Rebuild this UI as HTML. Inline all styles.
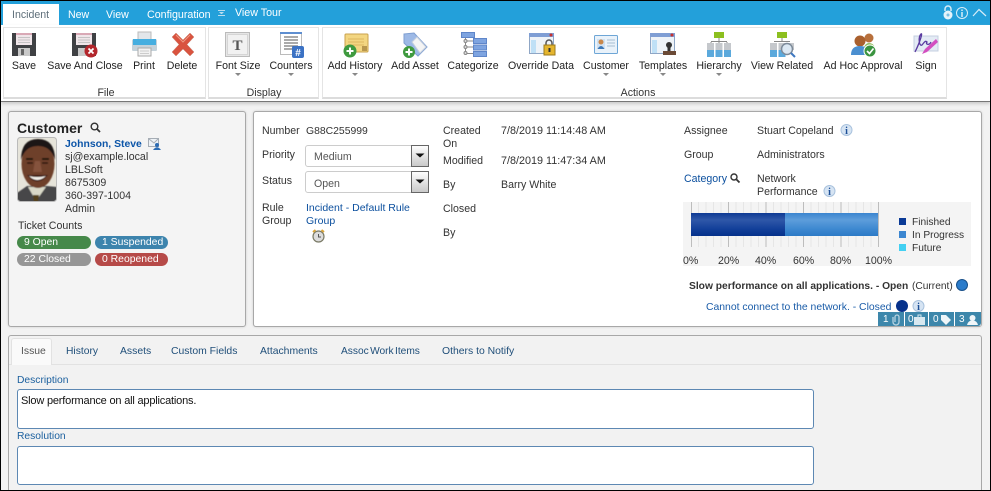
<!DOCTYPE html>
<html><head><meta charset="utf-8">
<style>
html,body{margin:0;padding:0;width:991px;height:491px;overflow:hidden;background:#f2f2f2}
body{position:relative;font-family:"Liberation Sans",sans-serif;font-size:10.6px;color:#333}
.a{position:absolute;white-space:nowrap;line-height:13px;margin-top:1px}
.b{position:absolute;box-sizing:border-box}
.t{color:#fff}
.r{color:#222;transform:translateX(-50%)}
.g{color:#333;transform:translateX(-50%)}
.l{color:#0b4f9e}
svg{position:absolute;overflow:visible}
.c{position:absolute;color:#fff;height:13px;line-height:14px;border-radius:7px;padding-left:7px;box-sizing:border-box;font-size:10.4px;white-space:nowrap}
.ar{position:absolute;width:0;height:0;border-left:3px solid transparent;border-right:3px solid transparent;border-top:3px solid #888;top:73px}
.tb{color:#1f4e79;font-size:10.4px}
</style></head><body>
<div class="b" style="left:1px;top:1px;width:989px;height:24px;background:#23a0da"></div>
<div class="b" style="left:3px;top:4px;width:56px;height:21px;background:#fff"></div>
<div class="a" style="left:12px;top:8px;color:#5f6f7a">Incident</div>
<div class="a t" style="left:68px;top:8px">New</div>
<div class="a t" style="left:106px;top:8px">View</div>
<div class="a t" style="left:147px;top:8px;font-size:10.700px">Configuration</div>
<div class="a t" style="left:235px;top:6px;font-size:10.700px">View Tour</div>
<svg style="left:218px;top:10px" width="8" height="6"><path d="M0 0H7V1H0ZM1 2H6L4 4H3Z M0 5H7V6H0Z" fill="#b8dcef"/></svg>
<svg style="left:942px;top:5px" width="45" height="16">
<path d="M3 6V4A3 3 0 0 1 9 4V6" fill="none" stroke="#d7edf8" stroke-width="1.500"/><circle cx="6" cy="10" r="4.500" fill="#e4f3fa"/><circle cx="6" cy="10" r="1.500" fill="#7cbfe2"/>
<circle cx="20" cy="8" r="5.500" fill="none" stroke="#d7edf8"/><path d="M20 4.500V6M20 7V12" stroke="#d7edf8" stroke-width="1.500"/>
<path d="M31 11L37 4.500L44 11" fill="none" stroke="#d7edf8" stroke-width="1.200"/></svg>

<div class="b" style="left:1px;top:25px;width:989px;height:77px;background:#fff;border-bottom:1px solid #777;box-shadow:0 2px 3px #ccc"></div>
<div class="b" style="left:3px;top:27px;width:203px;height:72px;border:1px solid #e4e4e4;border-bottom:2px solid #dcdcdc"></div>
<div class="b" style="left:208px;top:27px;width:111px;height:72px;border:1px solid #e4e4e4;border-bottom:2px solid #dcdcdc"></div>
<div class="b" style="left:322px;top:27px;width:625px;height:72px;border:1px solid #e4e4e4;border-bottom:2px solid #dcdcdc"></div>

<!-- ribbon icons -->
<svg style="left:12px;top:32px" width="24" height="25"><path d="M0 1H24V24H0Z" fill="#3f4144"/><rect x="4" y="1" width="16" height="12" fill="#f0e6ea"/><rect x="4" y="1" width="16" height="2" fill="#d9a9b6"/><path d="M6 5.500H18M6 8H18M6 10.500H18" stroke="#c4c4c4"/><rect x="6" y="16" width="12" height="8" fill="#c9c9c9"/><rect x="9" y="17" width="3" height="6" fill="#666"/></svg>
<svg style="left:72px;top:32px" width="26" height="26"><path d="M0 1H24V24H0Z" fill="#3f4144"/><rect x="4" y="1" width="16" height="12" fill="#f0e6ea"/><rect x="4" y="1" width="16" height="2" fill="#d9a9b6"/><path d="M6 5.500H18M6 8H18M6 10.500H18" stroke="#c4c4c4"/><rect x="6" y="16" width="12" height="8" fill="#c9c9c9"/><circle cx="19" cy="19" r="6.500" fill="#b3262c"/><path d="M16.500 16.500L21.500 21.500M21.500 16.500L16.500 21.500" stroke="#fff" stroke-width="1.800"/></svg>
<svg style="left:132px;top:32px" width="25" height="25"><rect x="6" y="0" width="13" height="8" fill="#e2e6ea" stroke="#bbb"/><path d="M2 7H23Q25 7 25 9V18Q25 19 23 19H2Q0 19 0 18V9Q0 7 2 7Z" fill="#c5d2da"/><rect x="1" y="7" width="23" height="6" fill="#45aee0"/><rect x="6" y="16" width="13" height="8" fill="#f2f2f2" stroke="#aaa"/><path d="M8 19H17M8 21.500H17" stroke="#ccc"/></svg>
<svg style="left:172px;top:33px" width="22" height="23"><path d="M4 0L11 7L18 0L22 4L15 11.500L22 19L18 23L11 16L4 23L0 19L7 11.500L0 4Z" fill="#d9533f" stroke="#c98a7a" stroke-width=".5"/><path d="M4 2L11 9L18 2" fill="none" stroke="#ee9a85"/></svg>
<svg style="left:225px;top:32px" width="25" height="25"><rect x=".5" y=".5" width="24" height="24" fill="#e6e6e6" stroke="#bbb"/><rect x="2.500" y="2.500" width="20" height="20" fill="#f1f1f1" stroke="#d5d5d5"/><text x="12.500" y="18" text-anchor="middle" font-family="Liberation Serif" font-weight="bold" font-size="15" fill="#555">T</text></svg>
<svg style="left:280px;top:32px" width="25" height="26"><rect x=".5" y=".5" width="21" height="22" fill="#fff" stroke="#bbb"/><rect x="0" y="0" width="22" height="2" fill="#5e8ed0"/><path d="M4 5H18M4 8H18M4 11H18M4 14H18M4 17H15" stroke="#555"/><rect x="12" y="14" width="12" height="12" rx="2" fill="#3b72c4"/><text x="18" y="24" text-anchor="middle" font-weight="bold" font-size="10" fill="#fff">#</text></svg>
<svg style="left:343px;top:33px" width="26" height="24"><rect x="2" y="1" width="23" height="18" rx="1" fill="#f3d681" stroke="#c9a24e"/><path d="M5 6H21M5 9H21M5 12H21" stroke="#dcb75e"/><rect x="19" y="13" width="5" height="5" fill="#b8974e"/><circle cx="7" cy="18" r="6.500" fill="#3f9a3f"/><path d="M7 14.500V21.500M3.500 18H10.500" stroke="#fff" stroke-width="2"/></svg>
<svg style="left:403px;top:32px" width="26" height="26"><path d="M1 2L11 1L24 15L15 24L1 11Z" fill="#9db9e6" stroke="#7f9fd2"/><path d="M9 10L14 5L23 15L17 21Z" fill="#f4f4f4" stroke="#c5cfdd"/><circle cx="6" cy="20" r="6" fill="#3f9a3f"/><path d="M6 16.500V23.500M2.500 20H9.500" stroke="#fff" stroke-width="2"/></svg>
<svg style="left:461px;top:32px" width="26" height="26"><rect x=".5" y=".5" width="13" height="5" fill="#7ea4e0" stroke="#5f86c9"/><path d="M4.500 6V21.500H12M4.500 9H12M4.500 15H12" fill="none" stroke="#888"/><circle cx="4.500" cy="9" r="1.500" fill="#ddd" stroke="#888"/><circle cx="4.500" cy="15" r="1.500" fill="#ddd" stroke="#888"/><circle cx="4.500" cy="21" r="1.500" fill="#ddd" stroke="#888"/><g fill="#7ea4e0" stroke="#5f86c9"><rect x="12.500" y="6.500" width="13" height="5"/><rect x="12.500" y="13" width="13" height="5"/><rect x="12.500" y="19.500" width="13" height="5"/></g></svg>
<svg style="left:529px;top:33px" width="27" height="25"><rect x=".5" y=".5" width="24" height="20" fill="#eef3f8" stroke="#8fa6c5"/><rect x="0" y="0" width="25" height="4" fill="#7f9ed4"/><circle cx="22" cy="2" r="1.500" fill="#c8322f"/><rect x="2" y="7" width="5" height="13" fill="#bfe0f6"/><path d="M17 12V10A3 3 0 0 1 23 10V12" fill="none" stroke="#555" stroke-width="1.500"/><rect x="15" y="12" width="11" height="10" fill="#e5b52e" stroke="#9c7a1c"/><rect x="19.500" y="15" width="2" height="4" fill="#333"/></svg>
<svg style="left:594px;top:35px" width="24" height="20"><rect x=".5" y=".5" width="23" height="18" rx="1" fill="#e9f2fa" stroke="#6ea6d6"/><rect x="3" y="4" width="8" height="10" fill="#cfe1f2"/><circle cx="7" cy="7" r="2.500" fill="#c9884a"/><path d="M3.500 14Q7 8 10.500 14Z" fill="#3b78b8"/><path d="M13 5H21M13 8H21M13 11H21" stroke="#a8bdd2"/></svg>
<svg style="left:650px;top:33px" width="27" height="25"><rect x=".5" y=".5" width="24" height="20" fill="#eef3f8" stroke="#8fa6c5"/><rect x="0" y="0" width="25" height="4" fill="#7f9ed4"/><circle cx="22" cy="2" r="1.500" fill="#c8322f"/><rect x="2" y="7" width="5" height="13" fill="#bfe0f6"/><circle cx="19" cy="12" r="3" fill="#333"/><rect x="17.500" y="13" width="3" height="6" fill="#333"/><rect x="13" y="18" width="13" height="4" fill="#6b4a36"/></svg>
<svg style="left:707px;top:32px" width="24" height="26"><rect x="7" y="0" width="10" height="6" fill="#8cbf1f"/><path d="M12 6V9M4 10V13M12 10V13M20 10V13M4 9.500H20" stroke="#888"/><g fill="#c5c8cc"><rect x="0" y="11" width="7" height="7"/><rect x="8.500" y="11" width="7" height="7"/><rect x="17" y="11" width="7" height="7"/></g><g fill="#5ba9dc"><rect x="0" y="18" width="7" height="7"/><rect x="8.500" y="18" width="7" height="7"/><rect x="17" y="18" width="7" height="7"/></g></svg>
<svg style="left:770px;top:32px" width="26" height="26"><rect x="7" y="0" width="10" height="6" fill="#8cbf1f"/><path d="M12 6V9M4 9.500H20" stroke="#888"/><g fill="#c5c8cc"><rect x="0" y="11" width="7" height="7"/><rect x="8.500" y="11" width="7" height="7"/><rect x="17" y="11" width="7" height="7"/></g><g fill="#5ba9dc"><rect x="0" y="18" width="7" height="7"/><rect x="8.500" y="18" width="7" height="7"/></g><circle cx="17" cy="17" r="5.500" fill="#dce8f3" stroke="#7d8a99" stroke-width="1.500"/><path d="M21 21L25 25" stroke="#3f78c0" stroke-width="2"/></svg>
<svg style="left:851px;top:32px" width="27" height="27"><circle cx="18" cy="6" r="4.500" fill="#b8703c"/><path d="M12 20Q13 11 18 11Q24 11 25 20Z" fill="#93bd64"/><circle cx="9" cy="9" r="5.500" fill="#a9602e"/><path d="M0 23Q0 14 9 14Q18 14 18 23Z" fill="#4b8fd0"/><circle cx="19" cy="19" r="6" fill="#3b9440" stroke="#fff"/><path d="M16 19L18.500 21.500L22.500 16.500" fill="none" stroke="#fff" stroke-width="1.700"/></svg>
<svg style="left:913px;top:32px" width="26" height="25"><rect x="1" y="4" width="24" height="15" fill="#e4ebf5" stroke="#c4cfe0"/><path d="M2 20C7 10 10 0 8 2C5 5 6 15 9 13C11 11 12 8 14 10C12 12 16 14 18 10" fill="none" stroke="#5a3aa0" stroke-width="1.300"/><path d="M9 22L12 17L23 7L25 10L14 20Z" fill="#d34fc0"/></svg>

<!-- ribbon labels -->
<div class="a r" style="left:24px;top:59px">Save</div>
<div class="a r" style="left:85px;top:59px">Save And Close</div>
<div class="a r" style="left:144px;top:59px">Print</div>
<div class="a r" style="left:182px;top:59px">Delete</div>
<div class="a r" style="left:238px;top:59px">Font Size</div>
<div class="a r" style="left:291px;top:59px">Counters</div>
<div class="a r" style="left:355px;top:59px">Add History</div>
<div class="a r" style="left:415px;top:59px">Add Asset</div>
<div class="a r" style="left:473px;top:59px">Categorize</div>
<div class="a r" style="left:541px;top:59px">Override Data</div>
<div class="a r" style="left:606px;top:59px">Customer</div>
<div class="a r" style="left:663px;top:59px">Templates</div>
<div class="a r" style="left:719px;top:59px">Hierarchy</div>
<div class="a r" style="left:782px;top:59px">View Related</div>
<div class="a r" style="left:863px;top:59px">Ad Hoc Approval</div>
<div class="a r" style="left:926px;top:59px">Sign</div>
<div class="ar" style="left:235px"></div><div class="ar" style="left:288px"></div><div class="ar" style="left:352px"></div><div class="ar" style="left:603px"></div><div class="ar" style="left:660px"></div><div class="ar" style="left:716px"></div>
<div class="a g" style="left:106px;top:86px">File</div>
<div class="a g" style="left:264px;top:86px">Display</div>
<div class="a g" style="left:638px;top:86px">Actions</div>

<!-- customer card -->
<div class="b" style="left:8px;top:111px;width:238px;height:216px;background:#f4f4f4;border:1px solid #a8a8a8;border-radius:3px;box-shadow:0 0 2px #ccc"></div>
<div class="a" style="left:17px;top:121px;margin-top:0;font-size:14px;line-height:15px;font-weight:bold;color:#222">Customer</div>
<svg style="left:90px;top:122px" width="11" height="11"><circle cx="4.500" cy="4.500" r="3.300" fill="none" stroke="#333" stroke-width="1.400"/><path d="M7 7L10 10" stroke="#333" stroke-width="1.800"/></svg>
<svg style="left:17px;top:137px" width="40" height="65"><defs><filter id="f" x="-10%" y="-10%" width="120%" height="120%"><feGaussianBlur stdDeviation=".6"/></filter><clipPath id="p"><rect x="0" y="0" width="40" height="64" rx="3"/></clipPath></defs><g clip-path="url(#p)"><rect width="40" height="64" fill="#e6e4da"/><g filter="url(#f)"><path d="M0 56L10 49H30L40 50V66H0Z" fill="#46464a"/><path d="M11 50L19 64L29 50Z" fill="#d9d9c8"/><path d="M16 58H22L21 66H17Z" fill="#54431f"/><ellipse cx="21" cy="27" rx="16.500" ry="24" fill="#6e3f2c"/><path d="M4 23Q4 2 21 2Q38 2 38 23Q34 9 21 9Q8 9 4 23Z" fill="#1f1512"/><path d="M9 22H16M25 22H32" stroke="#24130d" stroke-width="2"/><path d="M10 26H16M25 26H31" stroke="#2d1810" stroke-width="1.500"/><path d="M18 24L16 35H25L23 24Z" fill="#85523c"/><path d="M10 38Q20 51 31 38" fill="#3d1c12"/><path d="M12 39Q20 47 29 39Q20 41 12 39Z" fill="#f2efe9"/></g></g><rect x=".5" y=".5" width="39" height="64" rx="3" fill="none" stroke="#bbb"/></svg>
<div class="a l" style="left:65px;top:137px;font-weight:bold;color:#0c55a8;font-size:10.400px">Johnson, Steve</div>
<svg style="left:148px;top:137px" width="13" height="13"><rect x=".5" y="1.500" width="10" height="8" fill="#eef2f6" stroke="#a6adb5"/><path d="M1 2L6 6L10 2" fill="none" stroke="#a6adb5"/><circle cx="9" cy="8" r="2" fill="#2d6cb3"/><path d="M5 13Q9 7.500 13 13Z" fill="#2d6cb3"/></svg>
<div class="a" style="left:65px;top:150px">sj@example.local</div>
<div class="a" style="left:65px;top:163px">LBLSoft</div>
<div class="a" style="left:65px;top:176px">8675309</div>
<div class="a" style="left:65px;top:189px">360-397-1004</div>
<div class="a" style="left:65px;top:202px">Admin</div>
<div class="a" style="left:18px;top:219px">Ticket Counts</div>
<div class="c" style="left:17px;top:236px;width:74px;background:#46894a">9 Open</div>
<div class="c" style="left:95px;top:236px;width:73px;background:#3d84ad">1 Suspended</div>
<div class="c" style="left:17px;top:253px;width:74px;background:#969696">22 Closed</div>
<div class="c" style="left:95px;top:253px;width:73px;background:#b64a48">0 Reopened</div>

<!-- detail card -->
<div class="b" style="left:253px;top:111px;width:729px;height:216px;background:#fff;border:1px solid #a8a8a8;border-radius:3px;box-shadow:0 0 2px #ccc"></div>
<div class="a" style="left:262px;top:124px">Number</div>
<div class="a" style="left:306px;top:124px;font-size:10.400px">G88C255999</div>
<div class="a" style="left:262px;top:148px">Priority</div>
<div class="b" style="left:305px;top:145px;width:124px;height:22px;background:#fff;border:1px solid #ccc;border-radius:3px"></div>
<div class="a" style="left:314px;top:150px;color:#555">Medium</div>
<svg style="left:411px;top:145px" width="18" height="22"><defs><linearGradient id="s" x1="0" y1="0" x2="0" y2="1"><stop offset="0" stop-color="#fff"/><stop offset="1" stop-color="#c8c8c8"/></linearGradient></defs><rect x=".5" y=".5" width="17" height="21" fill="url(#s)" stroke="#666"/><path d="M4.500 8.500H13.500L9 12.500Z" fill="#111"/></svg>
<div class="a" style="left:262px;top:174px">Status</div>
<div class="b" style="left:305px;top:171px;width:124px;height:22px;background:#fff;border:1px solid #ccc;border-radius:3px"></div>
<div class="a" style="left:314px;top:177px;color:#555">Open</div>
<svg style="left:411px;top:171px" width="18" height="22"><rect x=".5" y=".5" width="17" height="21" fill="url(#s)" stroke="#666"/><path d="M4.500 8.500H13.500L9 12.500Z" fill="#111"/></svg>
<div class="a" style="left:262px;top:201px">Rule</div>
<div class="a" style="left:262px;top:214px">Group</div>
<div class="a l" style="left:306px;top:201px;font-size:10.500px">Incident - Default Rule</div>
<div class="a l" style="left:306px;top:214px;font-size:10.500px">Group</div>
<svg style="left:312px;top:229px" width="13" height="14"><circle cx="6.500" cy="7.500" r="5.500" fill="#dcdcdc" stroke="#7a7a66" stroke-width="1.200"/><path d="M1 3L3.500 1M12 3L9.500 1" stroke="#d9a53a" stroke-width="2"/><path d="M6.500 5V8H9" fill="none" stroke="#555"/></svg>
<div class="a" style="left:443px;top:124px">Created</div>
<div class="a" style="left:443px;top:137px">On</div>
<div class="a" style="left:443px;top:154px">Modified</div>
<div class="a" style="left:443px;top:178px">By</div>
<div class="a" style="left:443px;top:202px">Closed</div>
<div class="a" style="left:443px;top:226px">By</div>
<div class="a" style="left:501px;top:124px;font-size:10.800px">7/8/2019 11:14:48 AM</div>
<div class="a" style="left:501px;top:154px;font-size:10.800px">7/8/2019 11:47:34 AM</div>
<div class="a" style="left:501px;top:178px">Barry White</div>

<div class="a" style="left:684px;top:124px">Assignee</div>
<div class="a" style="left:757px;top:124px">Stuart Copeland</div>
<svg style="left:840px;top:124px" width="13" height="13"><circle cx="6.500" cy="6" r="5.500" fill="#d6e4f3" stroke="#a9c2dd"/><text x="6.500" y="10" text-anchor="middle" font-family="Liberation Serif" font-weight="bold" font-size="10" fill="#1d4f96">i</text></svg>
<div class="a" style="left:684px;top:148px">Group</div>
<div class="a" style="left:757px;top:148px">Administrators</div>
<div class="a l" style="left:684px;top:172px">Category</div>
<svg style="left:730px;top:173px" width="10" height="10"><circle cx="4" cy="4" r="3" fill="none" stroke="#333" stroke-width="1.400"/><path d="M6.500 6.500L9.500 9.500" stroke="#333" stroke-width="1.800"/></svg>
<div class="a" style="left:757px;top:172px">Network</div>
<div class="a" style="left:757px;top:185px">Performance</div>
<svg style="left:823px;top:185px" width="13" height="13"><circle cx="6.500" cy="6" r="5.500" fill="#d6e4f3" stroke="#a9c2dd"/><text x="6.500" y="10" text-anchor="middle" font-family="Liberation Serif" font-weight="bold" font-size="10" fill="#1d4f96">i</text></svg>

<!-- chart -->
<div class="b" style="left:683px;top:202px;width:288px;height:64px;background:#f4f4f4"></div>
<svg style="left:690px;top:202px" width="190" height="45"><g stroke="#e6e6e6"><path d="M8.500 0V45M16 0V45M23.500 0V45M31 0V45M46 0V45M53.500 0V45M61 0V45M68.500 0V45M83.500 0V45M91 0V45M98.500 0V45M106 0V45M121 0V45M128.500 0V45M136 0V45M143.500 0V45M158.500 0V45M166 0V45M173.500 0V45M181 0V45"/></g><g stroke="#bdbdbd"><path d="M1.500 0V45M38.500 0V45M76 0V45M113.500 0V45M151 0V45M188.500 0V45"/></g></svg>
<div class="b" style="left:691px;top:213px;width:94px;height:23px;background:linear-gradient(#0e3a94,#2f57a8 30%,#123f99 70%,#06318b)"></div>
<div class="b" style="left:785px;top:213px;width:93px;height:23px;background:linear-gradient(#3a85cf,#5d9ddb 30%,#3d88d0 70%,#2c7ac6)"></div>
<div class="a" style="left:683px;top:254px">0%</div>
<div class="a" style="left:718px;top:254px">20%</div>
<div class="a" style="left:755px;top:254px">40%</div>
<div class="a" style="left:793px;top:254px">60%</div>
<div class="a" style="left:830px;top:254px">80%</div>
<div class="a" style="left:865px;top:254px">100%</div>
<div class="b" style="left:899px;top:218px;width:7px;height:7px;background:#0a3a96"></div>
<div class="b" style="left:899px;top:231px;width:7px;height:7px;background:#3b86d0"></div>
<div class="b" style="left:899px;top:244px;width:7px;height:7px;background:#43d0f2"></div>
<div class="a" style="left:912px;top:215px;font-size:10.200px">Finished</div>
<div class="a" style="left:912px;top:228px;font-size:10.200px">In Progress</div>
<div class="a" style="left:912px;top:241px;font-size:10.200px">Future</div>

<div class="a" style="left:689px;top:279px;font-size:10.250px;font-weight:bold;color:#333">Slow performance on all applications. - Open</div>
<div class="a" style="left:912px;top:279px;font-size:10.200px">(Current)</div>
<div class="b" style="left:956px;top:279px;width:12px;height:12px;border-radius:50%;background:#2b7ccb;border:1px solid #18508a"></div>
<div class="a l" style="left:706px;top:300px;font-size:10.400px;color:#1a5ca8">Cannot connect to the network. - Closed</div>
<div class="b" style="left:896px;top:300px;width:12px;height:12px;border-radius:50%;background:#06318b"></div>
<svg style="left:912px;top:300px" width="13" height="13"><circle cx="6.500" cy="6" r="5.500" fill="#d6e4f3" stroke="#a9c2dd"/><text x="6.500" y="10" text-anchor="middle" font-family="Liberation Serif" font-weight="bold" font-size="10" fill="#1d4f96">i</text></svg>

<div class="b" style="left:878px;top:312px;width:26px;height:14px;background:#3d87ab"></div>
<div class="b" style="left:905px;top:312px;width:23px;height:14px;background:#3d87ab"></div>
<div class="b" style="left:929px;top:312px;width:25px;height:14px;background:#3d87ab"></div>
<div class="b" style="left:955px;top:312px;width:26px;height:14px;background:#3d87ab;border-radius:0 0 3px 0"></div>
<div class="a t" style="left:883px;top:312px;font-size:10px">1</div>
<svg style="left:892px;top:314px" width="8" height="11"><path d="M1 3V8A3 3 0 0 0 7 8V3A2 2 0 0 0 3 3V8" fill="none" stroke="#b6d3e1" stroke-width="1.300"/></svg>
<div class="a t" style="left:908px;top:312px;font-size:10px">0</div>
<svg style="left:914px;top:315px" width="12" height="10"><rect x="0" y="2" width="11" height="8" fill="#d8e8f0"/><path d="M4 2V0H7V2" fill="none" stroke="#d8e8f0"/></svg>
<div class="a t" style="left:933px;top:312px;font-size:10px">0</div>
<svg style="left:941px;top:315px" width="10" height="10"><path d="M0 0H5L10 5L5 10L0 5Z" fill="#eef5f8"/></svg>
<div class="a t" style="left:959px;top:312px;font-size:10px">3</div>
<svg style="left:967px;top:315px" width="11" height="10"><circle cx="5.500" cy="3" r="3" fill="#f0f6f9"/><path d="M0 10Q1 5.500 5.500 5.500Q10 5.500 11 10Z" fill="#f0f6f9"/></svg>

<!-- bottom -->
<div class="b" style="left:8px;top:335px;width:974px;height:156px;background:#f2f2f2;border:1px solid #a8a8a8;border-bottom:none;border-radius:3px 3px 0 0"></div>
<div class="b" style="left:9px;top:364px;width:972px;height:1px;background:#e2e2e2"></div>
<div class="b" style="left:11px;top:338px;width:41px;height:27px;background:#fafafa;border:1px solid #e2e2e2;border-bottom:none;border-radius:3px 3px 0 0"></div>
<div class="a" style="left:21px;top:344px;color:#555;font-size:10.400px">Issue</div>
<div class="a tb" style="left:66px;top:344px;font-size:10.300px">History</div>
<div class="a tb" style="left:120px;top:344px">Assets</div>
<div class="a tb" style="left:171px;top:344px">Custom Fields</div>
<div class="a tb" style="left:260px;top:344px">Attachments</div>
<div class="a tb" style="left:341px;top:344px;word-spacing:-1.500px;font-size:10.200px">Assoc Work Items</div>
<div class="a tb" style="left:442px;top:344px">Others to Notify</div>
<div class="a l" style="left:17px;top:373px;color:#1a5f9e;font-size:10.300px">Description</div>
<div class="b" style="left:17px;top:389px;width:797px;height:40px;background:#fff;border:1px solid #5d88b3;border-radius:3px"></div>
<div class="a" style="left:21px;top:394px;color:#111;letter-spacing:-.19px;font-size:11px">Slow performance on all applications.</div>
<div class="a l" style="left:17px;top:429px;color:#1a5f9e;font-size:10.300px">Resolution</div>
<div class="b" style="left:17px;top:446px;width:797px;height:39px;background:#fff;border:1px solid #5d88b3;border-radius:3px"></div>

<div class="b" style="left:0;top:0;width:991px;height:491px;border:1px solid #000;pointer-events:none"></div>
</body></html>
